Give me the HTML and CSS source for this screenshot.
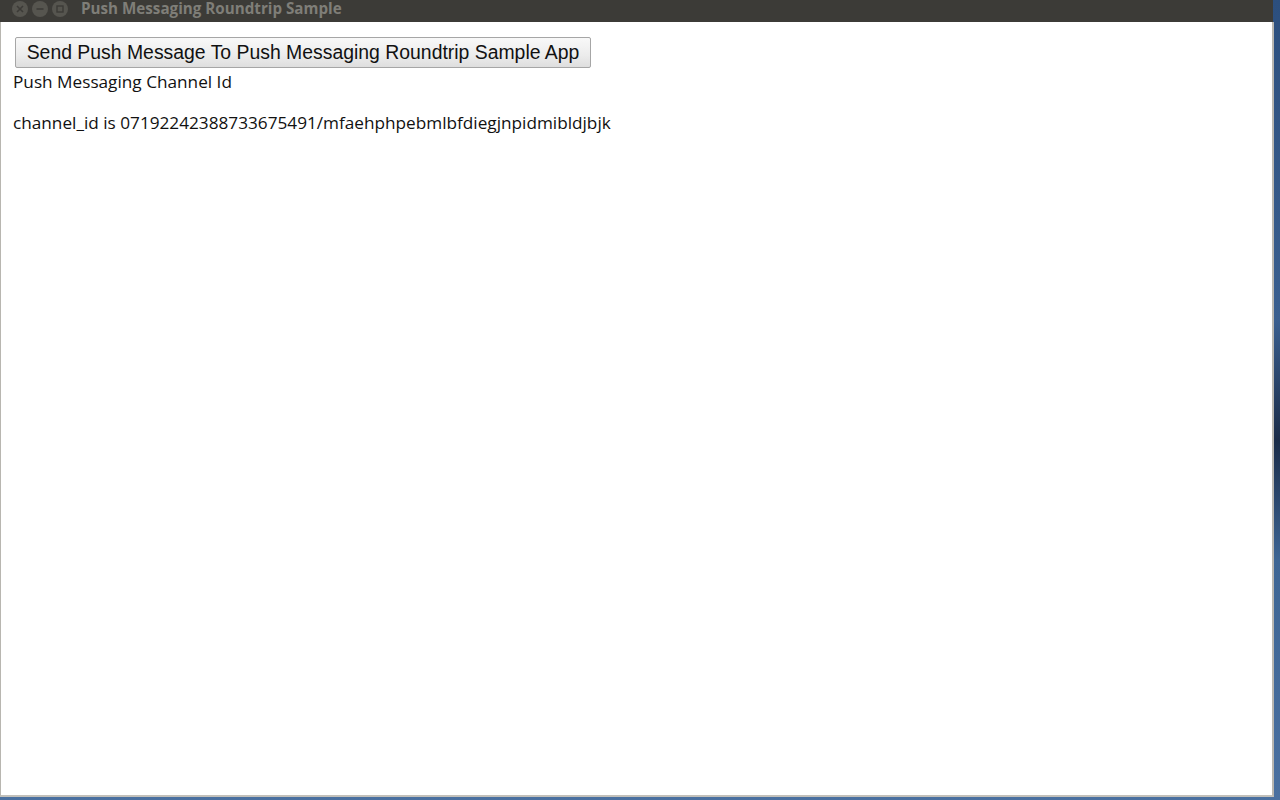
FILE: index.html
```html
<!DOCTYPE html>
<html>
<head>
<meta charset="utf-8">
<title>Push Messaging Roundtrip Sample</title>
<link rel="stylesheet" href="styles.css">
</head>
<body>
<div class="desktop">
  <div class="window">
    <div class="titlebar">
      <div class="controls">
        <span class="ctl"><svg width="8" height="8" viewBox="0 0 8 8"><path d="M1 1L7 7M7 1L1 7" stroke="#3c3b37" stroke-width="1.6"/></svg></span>
        <span class="ctl"><svg width="8" height="8" viewBox="0 0 8 8"><path d="M0.5 4H7.5" stroke="#3c3b37" stroke-width="1.6"/></svg></span>
        <span class="ctl"><svg width="8" height="8" viewBox="0 0 8 8"><rect x="1" y="1" width="6" height="6" fill="none" stroke="#3c3b37" stroke-width="1.4"/></svg></span>
      </div>
      <div class="title">Push Messaging Roundtrip Sample</div>
    </div>
    <div class="content">
      <button class="send">Send Push Message To Push Messaging Roundtrip Sample App</button>
      <div class="label">Push Messaging Channel Id</div>
      <p class="channel">channel_id is 07192242388733675491/mfaehphpebmlbfdiegjnpidmibldjbjk</p>
    </div>
  </div>
</div>
</body>
</html>
```

FILE: styles.css
```css
html, body {
  margin: 0;
  padding: 0;
  width: 1280px;
  height: 800px;
  overflow: hidden;
}
.desktop {
  width: 1280px;
  height: 800px;
  background: linear-gradient(180deg, #2c4f7e 0%, #3a5f8f 40%, #1a2c48 55%, #3d6594 70%, #4a70a0 100%);
}
.window {
  width: 1274px;
  height: 797px;
  display: flex;
  flex-direction: column;
}
.titlebar {
  height: 22px;
  flex: none;
  background: #3c3b37;
  display: flex;
  align-items: center;
  width: 1273px;
}
.controls {
  display: flex;
  gap: 4px;
  padding-left: 12px;
  align-items: center;
  margin-top: -5px;
}
.ctl {
  width: 16px;
  height: 16px;
  border-radius: 50%;
  background: #56554f;
  display: flex;
  align-items: center;
  justify-content: center;
}
.title {
  margin-left: 13px;
  font-family: "Open Sans", sans-serif;
  font-weight: 700;
  font-size: 15.2px;
  color: #7f7e78;
  margin-top: -6px;
}
.content {
  flex: 1;
  background: #ffffff;
  border-left: 1px solid #b8b6b0;
  border-right: 2px solid #b8b6b0;
  border-bottom: 2px solid #c2c0ba;
  padding: 15px 0 0 12px;
  font-family: "Open Sans", sans-serif;
  font-size: 17.2px;
  color: #111;
}
.send {
  display: block;
  margin: 0 0 0 2px;
  width: 576px;
  height: 31px;
  font-family: "Liberation Sans", Arial, sans-serif;
  font-size: 19.4px;
  color: #111;
  padding: 0 10px;
  border: 1px solid #a6a6a6;
  border-radius: 2px;
  background: linear-gradient(180deg, #f8f8f8 0%, #ececec 60%, #dedede 100%);
  white-space: nowrap;
}
.label {
  margin-top: 3px;
  line-height: 22px;
}
.channel {
  margin: 19px 0 0;
  line-height: 22px;
}
```
